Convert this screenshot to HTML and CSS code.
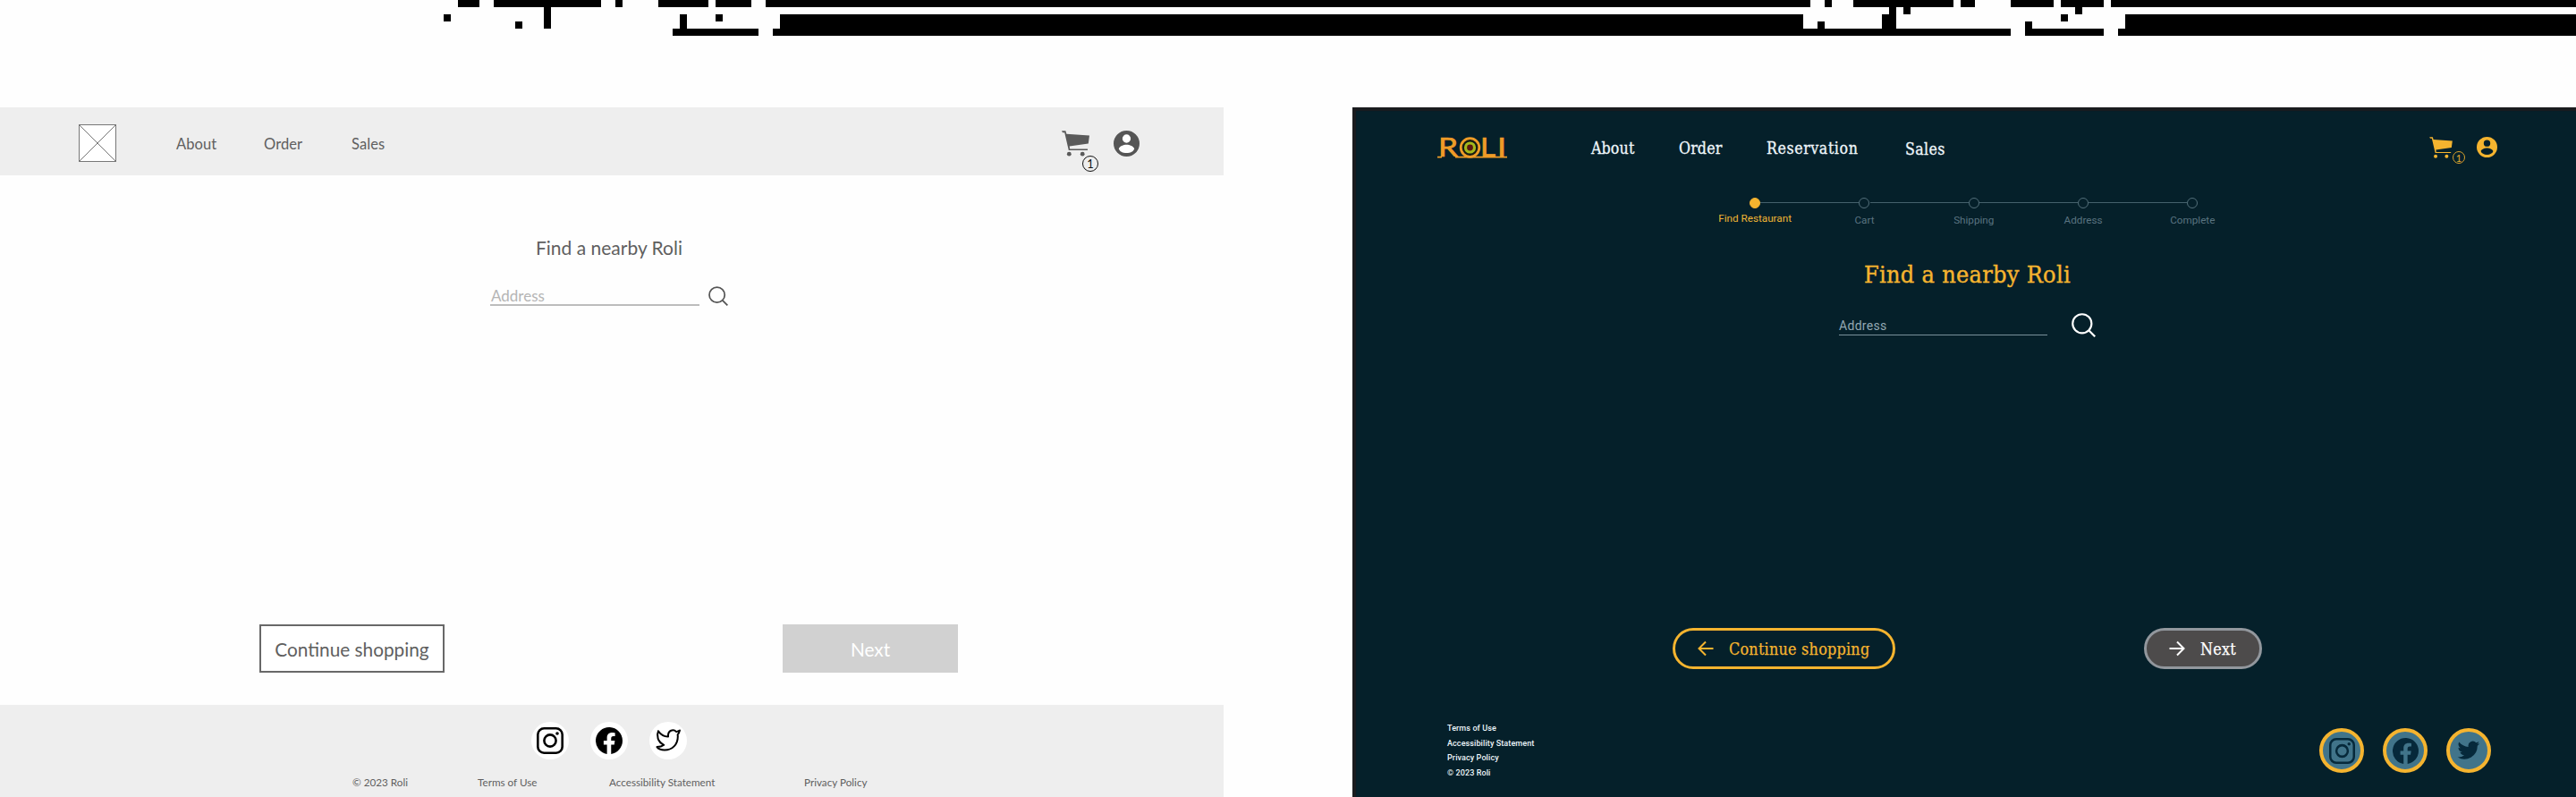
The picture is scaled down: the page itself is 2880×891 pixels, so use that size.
FILE: index.html
```html
<!DOCTYPE html>
<html lang="en">
<head>
<meta charset="utf-8">
<title>Roli</title>
<link rel="stylesheet" href="styles.css">
</head>
<body>
<svg width="0" height="0" class="defs">
  <symbol id="cart" viewBox="0 0 31 29">
    <path d="M0 .3h4.4l1 3.4L31 5.4l-1.2 9.2L8.7 17.5l.5 3H29v1.4H7.8L3.2 2.2H1z"/>
    <circle cx="8.3" cy="26.2" r="2.4"/><circle cx="23.2" cy="26.2" r="2.4"/>
  </symbol>
  <symbol id="user" viewBox="2 2 20 20">
    <path d="M12 2a10 10 0 1 0 0 20 10 10 0 0 0 0-20zm0 3a3.2 3.2 0 1 1 0 6.4A3.2 3.2 0 0 1 12 5zm0 14.3c-3 0-5.400-1.300-6-3.400.600-1.900 3.600-3.100 6-3.100s5.400 1.200 6 3.100c-.6 2.100-3 3.400-6 3.400z"/>
  </symbol>
  <symbol id="search" viewBox="0 0 24 24">
    <circle cx="10.500" cy="10.500" r="9.400" fill="none" stroke="currentColor" stroke-width="1.900"/><path d="M17.300 17.300l6 6" stroke="currentColor" stroke-width="2"/>
  </symbol>
  <symbol id="instagram" viewBox="0 0 30 30">
    <rect x="1.300" y="1.300" width="27.400" height="27.400" rx="7" fill="none" stroke="currentColor" stroke-width="2.600"/>
    <circle cx="15" cy="15" r="6.600" fill="none" stroke="currentColor" stroke-width="2.600"/><circle cx="23" cy="7" r="1.800" fill="currentColor"/>
  </symbol>
  <symbol id="facebook" viewBox="0 0 24 24">
    <path d="M24 12a12 12 0 1 0-13.900 11.900v-8.400h-3V12h3V9.400c0-3 1.800-4.700 4.500-4.700 1.300 0 2.700.2 2.700.2v3h-1.500c-1.500 0-2 .9-2 1.900V12h3.300l-.5 3.500h-2.800v8.400A12 12 0 0 0 24 12z"/>
  </symbol>
  <symbol id="bird" viewBox="0 0 24 20">
    <path d="M23.300 2.600c-.8.400-1.700.6-2.600.7a4.600 4.600 0 0 0 2-2.500c-.9.500-1.900.9-3 1.100a4.700 4.700 0 0 0-8 4.300C7.900 6 4.400 4.100 2.100 1.200a4.700 4.700 0 0 0 1.400 6.300c-.8 0-1.500-.2-2.100-.6a4.700 4.700 0 0 0 3.800 4.700c-.7.200-1.400.2-2.100.1a4.700 4.700 0 0 0 4.400 3.200A9.500 9.500 0 0 1 .6 16.900 13.400 13.400 0 0 0 21 5.100c.9-.7 1.700-1.500 2.300-2.500z"/>
  </symbol>
</svg>

<svg class="pixels" viewBox="0 0 360 5" shape-rendering="crispEdges">
  <path d="M64 0h3v1h-3zM69 0h15v1h-15zM86 0h1v1h-1zM92 0h7v1h-7zM100 0h5v1h-5zM107 0h146v1h-146zM255 0h1v1h-1zM259 0h14v1h-14zM274 0h2v1h-2zM281 0h6v1h-6zM288 0h6v1h-6zM295 0h65v1h-65z"/>
  <path d="M76 1h1v3h-1zM264 1h1v3h-1zM266 1h1v1h-1zM290 1h1v1h-1zM62 2h1v1h-1zM95 2h1v2h-1zM100 2h1v1h-1zM109 2h143v2h-143zM263 2h1v2h-1zM288 2h1v1h-1zM297 2h63v2h-63zM72 3h1v1h-1zM254 3h1v1h-1zM283 3h1v1h-1z"/>
  <path d="M94 4h12v1h-12zM108 4h173v1h-173zM283 4h11v1h-11zM296 4h64v1h-64z"/>
</svg>

<main class="boards">
  <section class="wire">
    <header class="wire-head">
      <svg class="wire-logo" viewBox="0 0 42 42"><rect x=".5" y=".5" width="41" height="41" fill="#fff"/><path d="M.5.5l41 41M41.500.5l-41 41"/></svg>
      <nav class="wire-nav"><a>About</a><a>Order</a><a>Sales</a></nav>
      <div class="wire-cart"><svg class="cart"><use href="#cart"/></svg><span class="badge">1</span></div>
      <svg class="user"><use href="#user"/></svg>
    </header>
    <div class="wire-body">
      <h1>Find a nearby Roli</h1>
      <div class="search-row"><div class="field">Address</div><svg class="search"><use href="#search"/></svg></div>
      <div class="actions"><button class="back"><span>Continue shopping</span></button><button class="next"><span>Next</span></button></div>
    </div>
    <footer class="wire-foot">
      <div class="social">
        <span><svg class="ig"><use href="#instagram"/></svg></span>
        <span><svg class="fb"><use href="#facebook"/></svg></span>
        <span><svg class="tw" viewBox="0 0 28 28"><path d="M27 2.500c-1.500 1-2.500 1.300-3.800 1.600-3.500-3.600-9.300-1.300-9.200 4v1.300C9.200 9.500 5.500 7 3 3.200c-2.100 5-1 12.300 6.300 15.600-2 1.500-4.300 2.300-7.800 2.300 1.500 2 4.500 3.400 8.500 3.400 8.500 0 14.800-6 14.800-15 0-.9 0-1.500-.2-2.200C25.700 6 26.500 4.500 27 2.500z"/></svg></span>
      </div>
      <div class="legal"><span>© 2023 Roli</span><span>Terms of Use</span><span>Accessibility Statement</span><span>Privacy Policy</span></div>
    </footer>
  </section>

  <section class="dark">
    <header class="dark-head">
      <svg class="logo" viewBox="0 0 78 24">
        <text x="1" y="22" textLength="22" lengthAdjust="spacingAndGlyphs">R</text>
        <text x="48" y="22" textLength="17" lengthAdjust="spacingAndGlyphs">L</text>
        <text x="67" y="22" textLength="10" lengthAdjust="spacingAndGlyphs">I</text>
        <path d="M0 22.700h5M20 22.700h58" stroke="#ef9c27" stroke-width="1.800"/>
        <circle cx="36.500" cy="12" r="10.300" fill="#171b12" stroke="#ef9c27" stroke-width="2.800"/>
        <circle cx="36.500" cy="12" r="5" fill="#5b1710" stroke="#a4b81c" stroke-width="3.200"/>
      </svg>
      <nav class="dark-nav"><a>About</a><a>Order</a><a>Reservation</a><a>Sales</a></nav>
      <div class="dark-cart"><svg class="cart"><use href="#cart"/></svg><span class="badge">1</span></div>
      <svg class="user"><use href="#user"/></svg>
    </header>
    <ol class="steps"><li class="on"><i></i>Find Restaurant</li><li><i></i>Cart</li><li><i></i>Shipping</li><li><i></i>Address</li><li><i></i>Complete</li></ol>
    <h1>Find a nearby Roli</h1>
    <div class="search-row"><div class="field">Address</div><svg class="search"><use href="#search"/></svg></div>
    <div class="actions">
      <button class="back"><svg viewBox="0 0 18 18"><path d="M17.500 9H1.500M9 1.500L1.500 9 9 16.500"/></svg><span>Continue shopping</span></button>
      <button class="next"><svg viewBox="0 0 18 18"><path d="M.5 9h16M9 1.500L16.500 9 9 16.500"/></svg><span>Next</span></button>
    </div>
    <footer class="dark-foot">
      <div class="legal"><span>Terms of Use</span><span>Accessibility Statement</span><span>Privacy Policy</span><span>© 2023 Roli</span></div>
      <div class="social">
        <span><svg class="ig"><use href="#instagram"/></svg></span>
        <span><svg class="fb"><use href="#facebook"/></svg></span>
        <span><svg class="tw"><use href="#bird"/></svg></span>
      </div>
    </footer>
  </section>
</main>
</body>
</html>
```

FILE: styles.css
```css
* { box-sizing: border-box; }
body { margin: 0; width: 2880px; height: 891px; overflow: hidden; background: #fefefe; }
svg { display: block; flex: none; overflow: visible; }
.defs { position: absolute; }
h1, ol { margin: 0; padding: 0; font-weight: 400; }
button { display: flex; align-items: center; padding: 0; font: inherit; flex: none; }
span, a { white-space: nowrap; }
.pixels { width: 2880px; height: 40px; }
.boards { display: flex; justify-content: space-between; padding-top: 80px; }
.wire, .dark { width: 1368px; height: 771px; display: flex; flex-direction: column; }
.wire-head, .dark-head, .search-row, .actions, .social, .legal, nav { display: flex; }
.badge { position: absolute; display: flex; align-items: center; justify-content: center; border-radius: 50%; }

/* wireframe board */
.wire { font-family: Lato, sans-serif; color: #5f5f5f; }
.wire-head { height: 76px; background: #eee; padding: 19px 0 0 88px; }
.wire-logo { width: 42px; height: 42px; stroke: #777; stroke-width: 1; }
.wire-nav { margin-left: 67px; padding-top: 11px; width: 990px; font-size: 16.500px; line-height: 22px; letter-spacing: .1px; }
.wire-nav a { width: 98px; }
.wire-cart { position: relative; height: 29px; margin-top: 7px; fill: #5a5a5a; }
.wire-cart .cart { width: 31px; height: 29px; }
.wire-cart .badge { left: 23px; top: 28px; width: 18px; height: 18px; border: 1.500px solid #111; color: #111; font-size: 13px; }
.wire-head .user { width: 29px; height: 29px; margin: 7px 0 0 27px; fill: #555; background: radial-gradient(#fff 60%, transparent 62%); }
.wire-body { height: 592px; }
.wire h1 { margin: 66px 0 0 599px; font-size: 21px; line-height: 30px; white-space: nowrap; }
.wire .search-row { margin: 28px 0 0 548px; height: 22px; }
.wire .field { width: 234px; border-bottom: 2px solid #bcbcbc; color: #b5b5b5; font-size: 17px; line-height: 22px; padding-left: 1px; }
.wire .search { width: 22px; height: 22px; margin-left: 10px; color: #555; }
.wire .actions { margin: 356px 0 0 290px; gap: 378px; }
.wire button { height: 54px; justify-content: center; font-size: 20.800px; color: #606060; border: 0; }
.wire .back { width: 207px; background: #fff; border: 2px solid #686868; }
.wire .next { width: 196px; background: #d1d1d1; color: #fff; }
.wire-foot { height: 103px; background: #eee; padding-top: 19px; }
.wire .social { padding-left: 594px; gap: 24px; }
.wire .social span { width: 42px; height: 42px; border-radius: 50%; background: #fff; display: flex; align-items: center; justify-content: center; color: #000; }
.wire .social svg { width: 30px; height: 30px; }
.wire .social .tw { width: 28px; height: 28px; fill: none; stroke: #000; stroke-width: 2; stroke-linejoin: round; }
.wire .legal { padding-left: 394px; font-size: 11.700px; line-height: 16px; margin-top: 17px; }
.wire .legal span:nth-child(1) { width: 140px; }
.wire .legal span:nth-child(2) { width: 147px; }
.wire .legal span:nth-child(3) { width: 218px; }

/* finished board */
.dark { background: #05202a; box-shadow: inset 4px 4px 1px #1a1b1e; color: #eef6fa; font-family: "DejaVu Serif Condensed", "DejaVu Serif", serif; }
.dark-head { padding: 33px 0 0 95px; height: 100px; }
.logo { width: 78px; height: 24px; }
.logo text { font: 400 29px Lato, sans-serif; fill: #ef9c27; stroke: #ef9c27; stroke-width: .7px; }
.dark-nav { margin-left: 94px; width: 937px; font-size: 17.600px; line-height: 26px; letter-spacing: .15px; -webkit-text-stroke: .3px; }
.dark-nav a:nth-child(1), .dark-nav a:nth-child(2) { width: 98px; }
.dark-nav a:nth-child(3) { width: 155px; letter-spacing: .6px; }
.dark-nav a:nth-child(4) { padding-top: 1px; letter-spacing: .4px; }
.dark-cart { position: relative; fill: #f5b42f; height: 24px; }
.dark-cart .cart { width: 26px; height: 24px; }
.dark-cart .badge { left: 26px; top: 16px; width: 14px; height: 14px; border: 1.500px solid #d9a02c; color: #e9ad31; font: 11px Lato, sans-serif; }
.dark-head .user { width: 23px; height: 23px; margin-left: 27px; fill: #f5b42f; }
.steps { display: flex; list-style: none; margin-left: 389px; width: 612px; font: 11.700px/14px Roboto, sans-serif; color: #5a7380; }
.steps li { flex: none; width: 122.300px; text-align: center; position: relative; white-space: nowrap; }
.steps i { display: block; width: 12px; height: 12px; margin: 1px auto 6px; border: 1px solid #536f7a; border-radius: 50%; }
.steps li + li::before { content: ""; position: absolute; height: 1px; background: #45616c; top: 6px; right: calc(50% + 6px); width: 110px; }
.steps .on { color: #f0b534; }
.steps .on i { background: #f5b42f; border-color: #f5b42f; margin-bottom: 4px; }
.dark h1 { margin: 35px 0 0 572px; font-size: 26.800px; line-height: 38px; color: #f5b42f; white-space: nowrap; height: 38px; letter-spacing: .3px; -webkit-text-stroke: .4px; }
.dark .search-row { margin: 24px 0 0 544px; height: 27px; }
.dark .field { width: 233px; height: 25px; border-bottom: 1px solid #79909b; font: 14px/24px Roboto, sans-serif; padding-top: 2px; color: #93a8b3; letter-spacing: .3px; }
.dark .search { width: 27px; height: 27px; margin-left: 27px; color: #fff; }
.dark .actions { margin: 325px 0 0 358px; gap: 278px; }
.dark button { height: 46px; border-radius: 23px; font-size: 17.800px; gap: 17px; letter-spacing: .25px; -webkit-text-stroke: .25px; }
.dark button svg { width: 18px; height: 18px; fill: none; stroke: currentColor; stroke-width: 2; }
.dark .back { width: 249px; padding-left: 25px; background: transparent; border: 3px solid #f5b42f; color: #f5b42f; }
.dark .next { width: 132px; padding-left: 25px; background: #4d4b4b; border: 3px solid #92979d; color: #fff; }
.dark-foot { display: flex; padding: 58px 0 0 106px; }
.dark .legal { width: 975px; flex-direction: column; font: 500 9px/16.500px Roboto, sans-serif; letter-spacing: .1px; }
.dark .social { padding-top: 8px; gap: 21px; }
.dark .social span { width: 50px; height: 50px; border-radius: 50%; border: 4px solid #f5b42f; background: #41748a; color: #06293b; fill: #06293b; display: flex; align-items: center; justify-content: center; }
.dark .social svg { width: 29px; height: 29px; }
.dark .social .tw { width: 26px; height: 22px; }
```
